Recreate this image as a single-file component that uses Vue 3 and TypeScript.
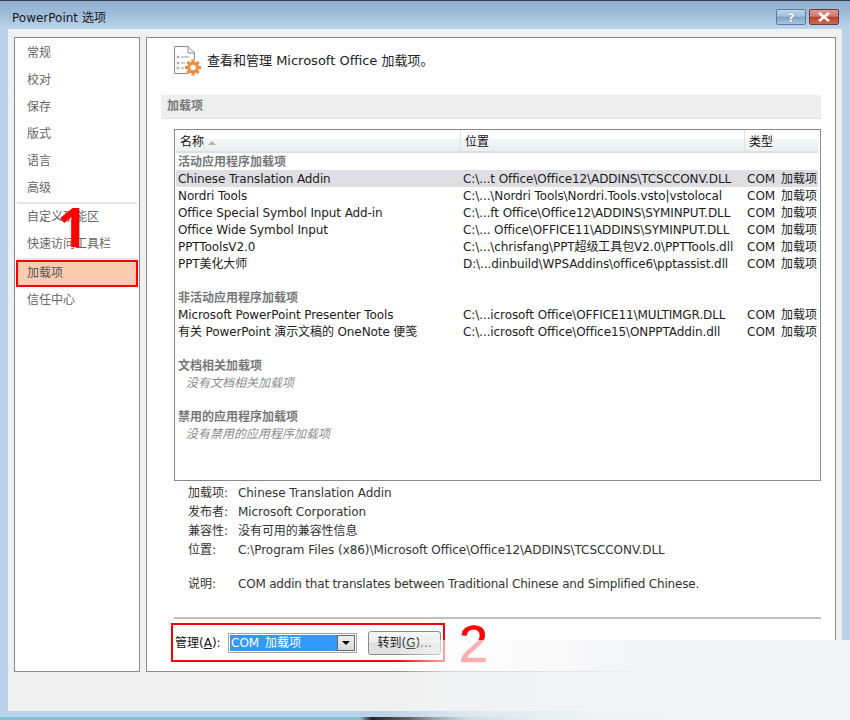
<script setup lang="ts">
interface Row { kind: 'group' | 'item' | 'blank' | 'empty'; name?: string; loc?: string; type?: string; sel?: boolean }
const nav1 = ['常规', '校对', '保存', '版式', '语言', '高级']
const nav2 = ['自定义功能区', '快速访问工具栏']
const com = 'COM 加载项'
const rows: Row[] = [
  { kind: 'group', name: '活动应用程序加载项' },
  { kind: 'item', name: 'Chinese Translation Addin', loc: 'C:\\...t Office\\Office12\\ADDINS\\TCSCCONV.DLL', type: com, sel: true },
  { kind: 'item', name: 'Nordri Tools', loc: 'C:\\...\\Nordri Tools\\Nordri.Tools.vsto|vstolocal', type: com },
  { kind: 'item', name: 'Office Special Symbol Input Add-in', loc: 'C:\\...ft Office\\Office12\\ADDINS\\SYMINPUT.DLL', type: com },
  { kind: 'item', name: 'Office Wide Symbol Input', loc: 'C:\\... Office\\OFFICE11\\ADDINS\\SYMINPUT.DLL', type: com },
  { kind: 'item', name: 'PPTToolsV2.0', loc: 'C:\\...\\chrisfang\\PPT超级工具包V2.0\\PPTTools.dll', type: com },
  { kind: 'item', name: 'PPT美化大师', loc: 'D:\\...dinbuild\\WPSAddins\\office6\\pptassist.dll', type: com },
  { kind: 'blank' },
  { kind: 'group', name: '非活动应用程序加载项' },
  { kind: 'item', name: 'Microsoft PowerPoint Presenter Tools', loc: 'C:\\...icrosoft Office\\OFFICE11\\MULTIMGR.DLL', type: com },
  { kind: 'item', name: '有关 PowerPoint 演示文稿的 OneNote 便笺', loc: 'C:\\...icrosoft Office\\Office15\\ONPPTAddin.dll', type: com },
  { kind: 'blank' },
  { kind: 'group', name: '文档相关加载项' },
  { kind: 'empty', name: '没有文档相关加载项' },
  { kind: 'blank' },
  { kind: 'group', name: '禁用的应用程序加载项' },
  { kind: 'empty', name: '没有禁用的应用程序加载项' }
]
const details = [
  ['加载项:', 'Chinese Translation Addin'],
  ['发布者:', 'Microsoft Corporation'],
  ['兼容性:', '没有可用的兼容性信息'],
  ['位置:', 'C:\\Program Files (x86)\\Microsoft Office\\Office12\\ADDINS\\TCSCCONV.DLL']
]
const teeth = [0, 45, 90, 135, 180, 225, 270, 315]
</script>

<template>
  <div class="win">
    <header class="titlebar">
      <span class="wintitle">PowerPoint 选项</span>
      <div class="winbtns">
        <div class="wb help">?</div>
        <div class="wb close">
          <svg width="14" height="10" viewBox="0 0 14 10"><path d="M2 1 L12 9 M12 1 L2 9" stroke="#fff" stroke-width="2.6" fill="none" /></svg>
        </div>
      </div>
    </header>
    <div class="client">
      <aside class="side">
        <div v-for="n in nav1" :key="n" class="nav">{{ n }}</div>
        <div class="navsep"></div>
        <div v-for="n in nav2" :key="n" class="nav">{{ n }}</div>
        <div class="navsep"></div>
        <div class="nav active">加载项</div>
        <div class="nav">信任中心</div>
      </aside>
      <main class="panel">
        <div class="head">
          <svg class="headicon" width="30" height="32" viewBox="0 0 30 32">
            <path d="M2.5 1.5 H16 L22.5 8 V28.5 H2.5 Z" fill="#fff" stroke="#8a8a8a" stroke-width="1" />
            <path d="M16 1.5 V8 H22.5" fill="none" stroke="#8a8a8a" stroke-width="1" />
            <g fill="none" stroke="#9a9a9a" stroke-width="1">
              <circle cx="6" cy="12" r="1" /><circle cx="6" cy="18" r="1" /><circle cx="6" cy="23" r="1" />
              <path d="M9 12 H17 M9 18 H13 M9 23 H12" />
            </g>
            <g transform="translate(21 22.5)">
              <circle r="8" fill="#fff" />
              <rect v-for="t in teeth" :key="t" x="-1.6" y="-8" width="3.2" height="4" fill="#ec8d3f" :transform="`rotate(${t})`" />
              <circle r="4.3" fill="#fff" stroke="#ec8d3f" stroke-width="3" />
            </g>
          </svg>
          <span class="headtext">查看和管理 Microsoft Office 加载项。</span>
        </div>
        <div class="section">加载项</div>
        <div class="inner">
          <div class="table">
            <div class="thead">
              <div class="th">名称<i class="sort"></i></div>
              <div class="th">位置</div>
              <div class="th last">类型</div>
            </div>
            <template v-for="(r, i) in rows" :key="i">
              <div v-if="r.kind === 'blank'" class="row"></div>
              <div v-else-if="r.kind === 'group'" class="row group">{{ r.name }}</div>
              <div v-else-if="r.kind === 'empty'" class="row none">{{ r.name }}</div>
              <div v-else class="row item" :class="{ sel: r.sel }">
                <span class="nm">{{ r.name }}</span><span class="lc">{{ r.loc }}</span><span class="ty">{{ r.type }}</span>
              </div>
            </template>
          </div>
          <div class="details">
            <div v-for="d in details" :key="d[0]" class="drow"><span>{{ d[0] }}</span><span class="dv">{{ d[1] }}</span></div>
            <div class="drow desc"><span>说明:</span><span class="dd">COM addin that translates between Traditional Chinese and Simplified Chinese.</span></div>
          </div>
          <div class="rule"></div>
          <div class="manage">
            <span class="mlabel">管理(<u>A</u>):</span>
            <div class="combo">
              <span class="cval">COM 加载项</span>
              <span class="carrow"><i></i></span>
            </div>
            <button class="go">转到(<u>G</u>)...</button>
          </div>
        </div>
      </main>
    </div>
    <div class="edge"></div>
    <span class="mark one">1</span>
    <span class="mark two">2</span>
    <div class="fade upper"></div>
    <div class="fade lower"></div>
  </div>
</template>

<style>
html, body { margin: 0; background: #f3f4f6; }
</style>

<style scoped>
.win {
  position: relative;
  width: 850px;
  height: 720px;
  overflow: hidden;
  display: flex;
  flex-direction: column;
  background: #b9d1ea;
  font-family: "DejaVu Sans", "Noto Sans CJK SC", sans-serif;
  font-size: 12px;
  color: #222;
  line-height: 17px;
}
.titlebar {
  height: 28px;
  flex: none;
  border-top: 1px solid #3c4046;
  background: linear-gradient(#8fb0d0, #a0bedb 50%, #bcd5ed);
  display: flex;
  justify-content: space-between;
  padding: 0 11px 0 12px;
}
.wintitle { margin-top: 9px; color: #1a1a1a; }
.winbtns { display: flex; gap: 3px; margin-top: 8px; }
.wb {
  width: 30px;
  height: 16px;
  border-radius: 2px;
  box-sizing: border-box;
  display: flex;
  align-items: center;
  justify-content: center;
  color: #fff;
  font-weight: bold;
  font-size: 13px;
}
.help {
  border: 1px solid #5d7d9c;
  background: linear-gradient(#bcd3e8 0, #a3c0dc 45%, #7da1c4 50%, #a8c6e2 100%);
  text-shadow: 0 0 1px #345;
}
.close {
  border: 1px solid #6e3a3a;
  background: linear-gradient(#dd9a92 0, #cf7a6e 45%, #b8412a 50%, #cc6a58 100%);
}
.client {
  flex: 1;
  margin: 0 8px 9px;
  padding: 8px 6px 39px;
  background: #f0f0f0;
  display: flex;
  gap: 6px;
  min-height: 0;
}
.side {
  width: 126px;
  box-sizing: border-box;
  flex: none;
  background: #fff;
  border: 1px solid #8a8a8e;
  padding: 2px 1px 1px;
}
.nav {
  height: 27px;
  line-height: 27px;
  padding-left: 11px;
  color: #666;
}
.navsep { height: 2px; margin: 0 1px; background: #e6e6e6; }
.active {
  box-sizing: border-box;
  line-height: 23px;
  padding-left: 9px;
  border: 2px solid #f00;
  background: #fbccb2;
  color: #555;
}
.panel {
  flex: 1;
  box-sizing: border-box;
  background: #fff;
  border: 1px solid #8a8a8e;
  min-width: 0;
}
.head {
  height: 57px;
  display: flex;
  align-items: flex-start;
  padding-left: 25px;
}
.headicon { margin-top: 7px; flex: none; }
.headtext { margin-top: 14px; margin-left: 5px; font-size: 13px; color: #222; }
.section {
  margin: 0 14px;
  height: 23px;
  line-height: 23px;
  padding-left: 6px;
  background: #eee;
  border-bottom: 1px solid #e2e2e2;
  font-weight: bold;
  color: #777;
}
.inner { margin: 10px 14px 0 27px; }
.table {
  box-sizing: border-box;
  height: 352px;
  border: 1px solid #8a8a8e;
  padding: 0 2px 0 1px;
}
.thead {
  height: 23px;
  box-sizing: border-box;
  border-bottom: 2px solid #dcdfe3;
  background: linear-gradient(#fff 0, #fff 40%, #f5f6f7 41%, #eceef0 100%);
  display: grid;
  grid-template-columns: 285px 284px 1fr;
  color: #111;
  line-height: 19px;
}
.th { padding: 3px 0 0 4px; border-right: 1px solid #dfe2e6; display: flex; align-items: center; box-sizing: border-box; }
.th.last { border-right: 0; }
.sort {
  width: 0; height: 0; margin-left: 4px;
  border-left: 4px solid transparent;
  border-right: 4px solid transparent;
  border-bottom: 4px solid #b7b28f;
}
.row { height: 17px; line-height: 18px; padding-left: 2px; white-space: nowrap; overflow: hidden; }
.group { color: #777; font-weight: bold; font-size: 12px; }
.none { color: #8c8c8c; font-style: italic; padding-left: 10px; }
.item { display: grid; grid-template-columns: 285px 284px 1fr; color: #1c1c1c; }
.nm { letter-spacing: -0.1px; }
.lc { letter-spacing: -0.09px; }
.ty { word-spacing: 2px; }
.sel { background: #dfdee3; }
.details { padding: 3px 0 0 14px; }
.drow { display: flex; height: 19px; line-height: 19px; color: #333; }
.drow span:first-child { width: 50px; flex: none; }
.dv { letter-spacing: -0.06px; }
.dd { letter-spacing: -0.2px; }
.desc { margin-top: 15px; }
.rule { height: 2px; background: #c0c0c0; margin-top: 23px; }
.manage {
  box-sizing: border-box;
  width: 274px;
  height: 39px;
  margin: 4px 0 0 -3px;
  border: 2px solid #f00;
  display: flex;
  align-items: center;
  padding-left: 2px;
  color: #111;
}
.mlabel { width: 53px; flex: none; margin-top: 1px; }
.combo {
  width: 129px;
  height: 20px;
  box-sizing: border-box;
  border: 1px solid #a4a4a8;
  display: flex;
  padding: 1px;
  background: #fff;
  flex: none;
  margin-top: 1px;
}
.cval { flex: 1; background: #3399ff; color: #fff; line-height: 16px; padding-left: 1px; word-spacing: 2px; }
.carrow {
  width: 18px;
  box-sizing: border-box;
  border: 1px solid #666;
  background: linear-gradient(#f0f0f0, #d8d8d8);
  display: flex;
  align-items: center;
  justify-content: center;
}
.carrow i {
  width: 0; height: 0;
  border-left: 4px solid transparent;
  border-right: 4px solid transparent;
  border-top: 4px solid #000;
}
.go {
  margin-left: 11px;
  width: 73px;
  height: 24px;
  box-sizing: border-box;
  border: 1px solid #8a8a8a;
  border-radius: 3px;
  background: linear-gradient(#f6f6f6, #ebebeb 50%, #dcdcdc 51%, #e4e4e4);
  font: inherit;
  color: #222;
  padding: 0;
  margin-top: 1px;
}
.edge {
  position: absolute;
  left: 0; right: 0; bottom: 0;
  height: 3px;
  background: linear-gradient(90deg, #7fc3cf 0, #7fc3cf 360px, #222 372px, #333 410px, #8fb9bd 470px, #dfe6ea 600px, #f3f4f6 700px);
}
.mark {
  position: absolute;
  color: #f00;
  line-height: 1;
}
.one { left: 57px; top: 199px; font-family: "Open Sans", sans-serif; font-size: 54px; font-weight: 700; }
.two { left: 459px; top: 618px; font-family: "Liberation Sans", sans-serif; font-size: 52px; -webkit-text-stroke: 0.6px #f00; }
.fade { position: absolute; right: 0; pointer-events: none; }
.upper {
  left: 395px; top: 640px; height: 32px;
  background: linear-gradient(90deg, rgba(250,250,250,0) 0, rgba(250,250,250,.66) 50px, rgba(248,248,249,.8) 150px, #f3f4f6 260px);
}
.lower {
  left: 370px; top: 672px; bottom: 0;
  background: linear-gradient(90deg, rgba(243,244,246,0) 0, rgba(243,244,246,.6) 90px, rgba(243,244,246,.9) 220px, #f3f4f6 340px);
}
</style>
